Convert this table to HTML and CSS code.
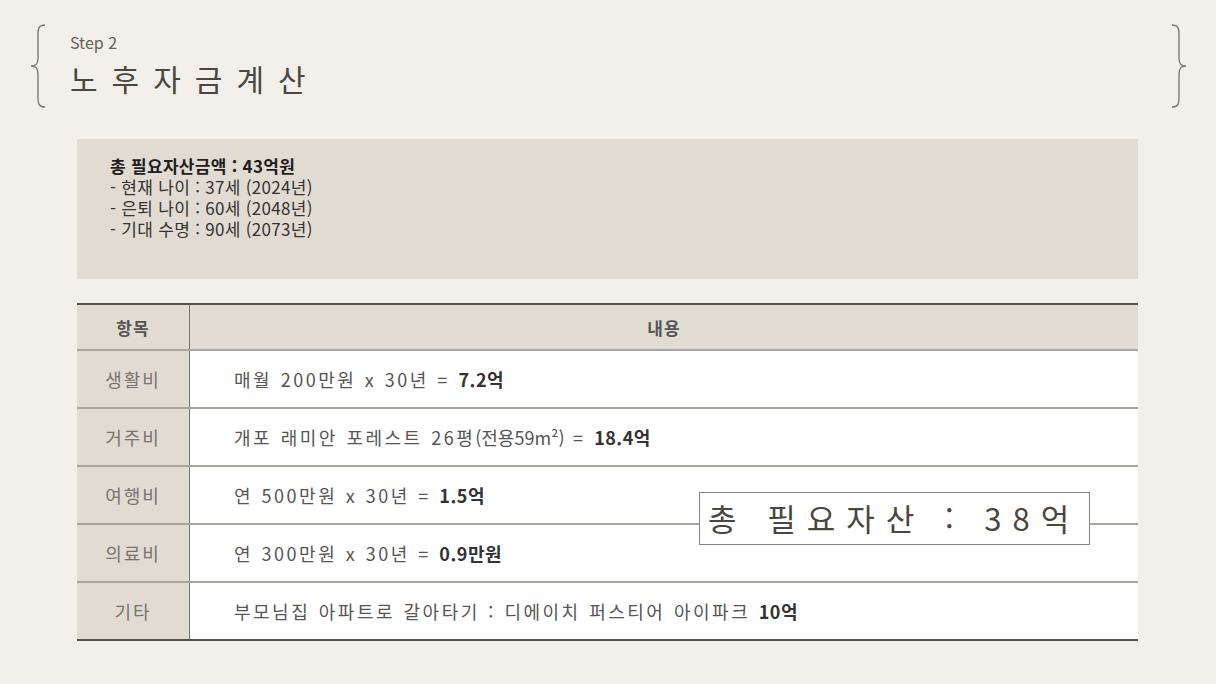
FILE: index.html
```html
<!DOCTYPE html>
<html lang="ko">
<head>
  <meta charset="utf-8">
  <title>노후자금계산</title>
  <link rel="stylesheet" href="styles.css">
</head>
<body>
  <div class="page">
    <div class="head">
      <svg class="brace" width="18" height="84" viewBox="0 0 18 84">
        <path d="M16 1 C10 1 9 4 9 10 L9 34 C9 40 7 42 2 42 C7 42 9 44 9 50 L9 74 C9 80 10 83 16 83" fill="none" stroke="#7d7973" stroke-width="1.4"/>
      </svg>
      <div class="title-block">
        <div class="step">Step 2</div>
        <h1>노후자금계산</h1>
      </div>
      <svg class="brace" width="18" height="84" viewBox="0 0 18 84">
        <path d="M2 1 C8 1 9 4 9 10 L9 34 C9 40 11 42 16 42 C11 42 9 44 9 50 L9 74 C9 80 8 83 2 83" fill="none" stroke="#7d7973" stroke-width="1.4"/>
      </svg>
    </div>

    <div class="content">
      <div class="summary">
        <div class="summary-title">총 필요자산금액 : 43억원</div>
        <div>- 현재 나이 : 37세 (2024년)</div>
        <div>- 은퇴 나이 : 60세 (2048년)</div>
        <div>- 기대 수명 : 90세 (2073년)</div>
      </div>

      <div class="table-wrap">
        <table class="cost-table">
          <tr>
            <th class="col-item">항목</th>
            <th>내용</th>
          </tr>
          <tr>
            <td class="col-item">생활비</td>
            <td>매월 200만원 x 30년 = <b>7.2억</b></td>
          </tr>
          <tr>
            <td class="col-item">거주비</td>
            <td>개포 래미안 포레스트 26평<span class="tight">(전용59m²)</span> = <b>18.4억</b></td>
          </tr>
          <tr>
            <td class="col-item">여행비</td>
            <td>연 500만원 x 30년 = <b>1.5억</b></td>
          </tr>
          <tr>
            <td class="col-item">의료비</td>
            <td>연 300만원 x 30년 = <b>0.9만원</b></td>
          </tr>
          <tr>
            <td class="col-item">기타</td>
            <td>부모님집 아파트로 갈아타기 : 디에이치 퍼스티어 아이파크 <b>10억</b></td>
          </tr>
        </table>
        <div class="total-box">총 필요자산 : 38억</div>
      </div>
    </div>
  </div>
</body>
</html>
```

FILE: styles.css
```css
/* 노후자금 계산 슬라이드 */
body {
  margin: 0;
  background-color: #f3f0eb;
  font-family: "Noto Sans CJK KR", "Noto Sans", sans-serif;
  color: #4a4640;
}

.page {
  width: 1216px;
  height: 684px;
}

.head {
  display: flex;
  align-items: flex-start;
  padding: 24px 28px 0 29px;
}

.brace {
  display: block;
}

.title-block {
  flex: 1;
  padding-left: 23px;
}

.step {
  font-size: 16px;
  color: #66625c;
  line-height: 20px;
  margin-top: 8px;
}

h1 {
  margin: 4px 0 0 0;
  font-size: 30px;
  font-weight: normal;
  letter-spacing: 14px;
  line-height: 44px;
  color: #4a4640;
}

.content {
  padding: 31px 78px 0 77px;
}

.summary {
  height: 140px;
  box-sizing: border-box;
  background-color: #e1dbd2;
  padding: 16px 33px;
  font-size: 17px;
  line-height: 21px;
  color: #333333;
  letter-spacing: 0.3px;
}

.summary-title {
  font-weight: bold;
  color: #1e1e1e;
}

.table-wrap {
  position: relative;
  margin-top: 24px;
}

.cost-table {
  width: 100%;
  border-collapse: collapse;
  border-top: 2px solid #55524d;
  border-bottom: 2px solid #55524d;
  background-color: #ffffff;
}

.cost-table th {
  height: 42px;
  background-color: #e1dbd2;
  font-size: 17px;
  font-weight: bold;
  color: #555555;
  letter-spacing: 1px;
  border-bottom: 2px solid #a8a49e;
}

.cost-table td {
  height: 56px;
  padding: 0 0 0 44px;
  font-size: 18px;
  letter-spacing: 2.5px;
  word-spacing: 1px;
  color: #555555;
  border-bottom: 2px solid #a8a49e;
}

.cost-table tr:last-child td {
  border-bottom: none;
}

.cost-table .col-item {
  width: 112px;
  padding: 0;
  text-align: center;
  background-color: #e1dbd2;
  border-right: 1px solid #77736d;
  font-size: 18px;
  font-weight: normal;
  letter-spacing: 2px;
  color: #777370;
}

.cost-table th.col-item {
  font-weight: bold;
  font-size: 17px;
  letter-spacing: 1px;
  color: #555555;
}

.cost-table b {
  color: #333333;
  letter-spacing: 0.5px;
}

.tight {
  letter-spacing: 0;
}

.total-box {
  position: absolute;
  left: 622px;
  top: 189px;
  width: 391px;
  height: 53px;
  box-sizing: border-box;
  border: 1px solid #888480;
  background-color: #ffffff;
  padding-left: 8px;
  font-size: 31px;
  line-height: 50px;
  letter-spacing: 11px;
  color: #4a4640;
  white-space: nowrap;
}
```
